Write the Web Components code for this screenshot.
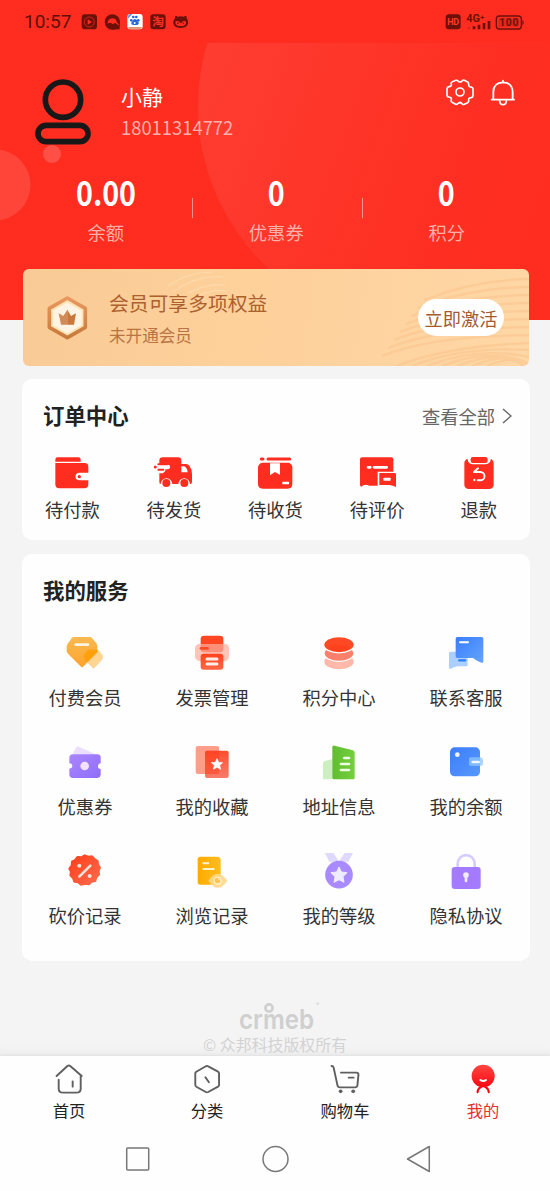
<!DOCTYPE html>
<html lang="zh-CN">
<head>
<meta charset="utf-8">
<title>我的</title>
<style>
html,body{margin:0;padding:0;background:#fefefe}
body{width:550px;height:1191px;overflow:hidden;font-family:"Noto Sans CJK SC",sans-serif;color:#303030}
</style>
</head>
<body>
<mine-page></mine-page>
<script>
const ICONS = {
  wallet: ['98 189 120 120', `<g fill="#ff2d20"><path d="M108 215v-6q0-7 7-7h62q7 0 7 7v6z"/><path d="M108 219h88q11 0 11 11v18h-27a11.500 11.500 0 0 0 0 23h27v12q0 12-12 12h-75q-12 0-12-12z"/><circle cx="180" cy="260" r="5"/></g>`],
  truck: ['402 189 120 120', `<g fill="#ff2d20"><path d="M418 212q0-10 10-10h46q10 0 10 10v10h14q7 0 11 7 7 10 7 23v24q0 6-5 6h-1a17.500 17.500 0 0 0-35 0h-18a17.500 17.500 0 0 0-35 0q-4 0-4-5z"/><circle cx="439" cy="279" r="12"/><circle cx="493" cy="279" r="12"/></g><path d="M484 229h8q10 4 11 18h-19z" fill="#fff"/><path d="M412 231h32M412 240h18" stroke="#fff" stroke-width="13" stroke-linecap="round"/><path d="M415 223h28M415 239h15" stroke="#ff2d20" stroke-width="6" stroke-linecap="round"/><path d="M415 231h30M415 247h14" stroke="#fff" stroke-width="5" stroke-linecap="round"/><circle cx="406" cy="231" r="4.500" fill="#ff2d20"/>`],
  box: ['706 189 120 120', `<path d="M725 207h5M745 207h65" stroke="#ff2d20" stroke-width="9" stroke-linecap="round"/><path d="M727 218h81q10 5 10 14v50q0 14-14 14h-75q-14 0-14-14v-49q0-11 12-15z" fill="#ff2d20"/><path d="M751 220h30v35l-15-9-15 10z" fill="#fff"/><rect x="788" y="275" width="20" height="8" rx="2" fill="#fff"/>`],
  comment: ['231 189 120 120', `<path d="M240 208q0-6 6-6h88q6 0 6 6v37h-47v42h-25q-14-7-24 3-4-2-4-6z" fill="#ff2d20"/><path d="M298 249h46q4 0 4 4v38q-13-6-21-6h-29z" fill="#ff2d20"/><path d="M264 232h7M282 232h38" stroke="#fff" stroke-width="8" stroke-linecap="round"/><rect x="310" y="263" width="22" height="9" rx="2" fill="#fff"/>`],
  refund: ['537 189 120 120', `<rect x="553" y="206" width="88" height="91" rx="13" fill="#ff2d20"/><path d="M563 196h69v14q-3 13-18 13h-35q-14-1-16-14z" fill="#fff"/><rect x="572" y="201" width="51" height="18" rx="7" fill="#ff2d20"/><path d="M594 235l-12 11h19a11 11 0 0 1 0 25h-8" fill="none" stroke="#fff" stroke-width="6" stroke-linecap="round" stroke-linejoin="round"/><circle cx="583" cy="270" r="3.500" fill="#fff"/>`],
  gem: ['136 219 120 120', `<defs><linearGradient id="g" x2="0" y2="1"><stop stop-color="#f8b951"/><stop offset="1" stop-color="#ffa42d"/></linearGradient></defs><path d="M163 231h46q5 0 8 3l13 16q3 4 3 9v14q0 4-4 8l-39 39q-3 3-6 0l-39-39q-4-4-4-9v-13q0-4 3-8l12-16q3-4 7-4z" fill="url(#g)"/><path d="M209 269h22q4 0 7 3l9 11q3 4 3 8 0 5-3 8l-22 24q-3 3-7 0l-22-23q-4-4-4-9t3-9l8-9q3-4 6-4z" fill="#ff9d00" fill-opacity=".42"/><path d="M168 254h37" stroke="#fff4df" stroke-width="8" stroke-linecap="round"/><path d="M194 283q4-12 16-14h21l3 3v4l-32 29-9-11q-2-5 1-11z" fill="#ff9d00" fill-opacity=".65"/>`],
  invoice: ['517 219 120 120', `<defs><linearGradient id="g" x2="0" y2="1"><stop stop-color="#ff421d"/><stop offset="1" stop-color="#ff6745"/></linearGradient></defs><rect x="543" y="227" width="68" height="50" rx="10" fill="#ff4723"/><path d="M537 252h81q8 0 10 11v28q-1 12-16 13h-68q-14 0-18-12v-28q2-10 11-12z" fill="#ffac9b" fill-opacity=".72"/><rect x="543" y="281" width="68" height="48" rx="9" fill="url(#g)"/><path d="M544 265h20" stroke="#fc4b29" stroke-width="8" stroke-linecap="round"/><path d="M562 297h30M562 312h30" stroke="#ffede8" stroke-width="9" stroke-linecap="round"/>`],
  points: ['118 219 120 120', `<ellipse cx="178" cy="305" rx="44" ry="23" fill="#ffb9ab"/><ellipse cx="178" cy="280" rx="45" ry="24" fill="#fb806b" stroke="#fff" stroke-width="4"/><ellipse cx="178" cy="254" rx="46" ry="24.500" fill="#ff4925" stroke="#fff" stroke-width="4"/><ellipse cx="178" cy="264" rx="31" ry="10" fill="#ff3511" opacity=".35"/>`],
  service: ['499 219 120 120', `<defs><linearGradient id="g" x2="1" y2="1"><stop stop-color="#397dff"/><stop offset="1" stop-color="#65a5f8"/></linearGradient></defs><path d="M513 275h47q4 0 4 5v35q0 4-5 4h-26q-10 2-21 8-4 1-4-5v-42q0-5 5-5z" fill="#abcfff"/><path d="M533 231h73q5 0 5 5v69q-1 5-6 3-18-7-24-14h-48q-5 0-5-5v-53q0-5 5-5z" fill="url(#g)"/><path d="M541 247h24" stroke="#fff" stroke-width="6" stroke-linecap="round"/><path d="M539 301h17" stroke="#287dff" stroke-width="7" stroke-linecap="round"/>`],
  coupon: ['136 546 120 120', `<defs><linearGradient id="g" x2="1" y2="1"><stop stop-color="#a987ff"/><stop offset="1" stop-color="#906dfa"/></linearGradient></defs><path d="M159 583l10-20q3-4 8-3l48 21v3z" fill="#ecdefe"/><path d="M159 583h75q9 1 9 9v18q-8 1-8 9t8 8v18q-1 8-9 9h-75q-9-1-10-9v-19q9-1 9-8t-9-8v-18q1-8 10-9z" fill="url(#g)"/><circle cx="195" cy="618" r="13" fill="#f2e2ff"/>`],
  favorite: ['517 546 120 120', `<defs><linearGradient id="g" x2="0" y2="1"><stop stop-color="#ff4e2c"/><stop offset="1" stop-color="#f87c6a"/></linearGradient></defs><rect x="528" y="558" width="70" height="84" rx="6" fill="#ff9d8b"/><rect x="556" y="572" width="71" height="82" rx="6" fill="url(#g)"/><path d="M556 578q0-6 6-6h36v70h-42z" fill="#ff3a1a" opacity=".45"/><path d="M592 596l5 11 12 1-9 8 3 12-11-6-11 6 3-12-9-8 12-1z" fill="#fff" stroke="#fff" stroke-width="2"/>`],
  address: ['118 546 120 120', `<defs><linearGradient id="g" x2="1"><stop stop-color="#60bd31"/><stop offset="1" stop-color="#75cf3e"/></linearGradient></defs><path d="M136 603l22-6v61h-24q-4 0-4-4v-43q0-6 6-8z" fill="#ccefc0"/><path d="M158 562q0-7 7-5l55 14q5 2 5 7v75q0 5-5 5h-57q-5 0-5-5z" fill="url(#g)"/><path d="M194 594h14M184 612h24M184 630h24" stroke="#edffdf" stroke-width="8" stroke-linecap="round"/>`],
  balance: ['499 546 120 120', `<defs><linearGradient id="g" x2="1" y2="1"><stop stop-color="#3c7dfd"/><stop offset="1" stop-color="#5798fa"/></linearGradient></defs><rect x="511" y="562" width="90" height="87" rx="14" fill="url(#g)"/><circle cx="533" cy="584" r="7" fill="#f0f7ff"/><path d="M573 592h29q7 0 8 8v12q-1 6-8 6h-29q-5 0-5-5v-16q0-5 5-5z" fill="#8dc5ff" fill-opacity=".75"/><path d="M579 606h18" stroke="#f1f8ff" stroke-width="8" stroke-linecap="round"/>`],
  bargain: ['136 33 120 120', `<defs><linearGradient id="g" x2="1" y2="1"><stop stop-color="#ff3d19"/><stop offset="1" stop-color="#fc6d50"/></linearGradient></defs><path fill="url(#g)" stroke="url(#g)" stroke-width="6" stroke-linejoin="round" d="M195 46l11 4 11-1 8 8 9 6 1 11 6 9-4 10 1 11-8 8-3 11-11 2-8 8-12-2-12 3-9-7-11-2-4-11-8-8 2-11-5-9 7-9 1-12 9-5 7-9 12 1z"/><path d="M179 110l33-33" stroke="#ffe1d8" stroke-width="8" stroke-linecap="round"/><circle cx="179" cy="77" r="6" fill="#ffe1d8"/><circle cx="210" cy="108" r="6" fill="#ffe1d8"/>`],
  history: ['517 33 120 120', `<defs><linearGradient id="g" x2="1"><stop stop-color="#ffab00"/><stop offset="1" stop-color="#ffbc1f"/></linearGradient></defs><path d="M542 50h50q11 0 11 11v56q0 17-18 17h-43q-8 0-8-8V58q0-8 8-8z" fill="url(#g)"/><path d="M551 70h15M551 87h31" stroke="#fff3d0" stroke-width="6" stroke-linecap="round"/><path d="M566 122q27-42 57 0-29 43-57 0z" fill="#ffd789" fill-opacity=".9"/><circle cx="594" cy="122" r="10" fill="none" stroke="#fff0cd" stroke-width="4"/><path d="M594 122l7-3a8 8 0 1 1-7-6z" fill="#ffc24f"/>`],
  level: ['898 33 120 120', `<path d="M916 39h25l16 24-8 2h-20zM975 39h25l-14 26h-20l-7-3z" fill="#dfd8ff"/><circle cx="958" cy="104" r="41.500" fill="#a98bff"/><path d="M958 81l7 15 17 2-12 12 3 17-15-8-15 8 3-17-12-12 17-2z" fill="#f0ecff" stroke="#f0ecff" stroke-width="3" stroke-linejoin="round"/>`],
  privacy: ['1279 33 120 120', `<path d="M1314 84V71a25.500 25.500 0 0 1 51 0v13" fill="none" stroke="#d7ccff" stroke-width="8"/><rect x="1296" y="81" width="87" height="66" rx="9" fill="#a47bff"/><circle cx="1339" cy="105" r="8.500" fill="#f2eaff"/><path d="M1339 105v18" stroke="#f2eaff" stroke-width="8" stroke-linecap="round"/>`],
  home: ['145 34 103 108', `<g fill="none" stroke="#606060" stroke-width="5.500" stroke-linecap="round" stroke-linejoin="round"><path d="M161 79l31-30q4-3 8 0l33 30M167 90v27q0 12 13 12h37q13 0 13-12V78M207 95v16"/></g>`],
  category: ['539 34 103 108', `<g fill="none" stroke="#606060" stroke-width="5.500" stroke-linecap="round" stroke-linejoin="round"><path d="M587 50q4-2 7 0l28 16q3 2 3 5v35q0 3-3 5l-28 16q-4 2-7 0l-27-16q-3-2-3-5V71q0-3 3-5zM586 83l10 15"/></g>`],
  cart: ['932 34 103 108', `<g fill="none" stroke="#606060" stroke-width="5.500" stroke-linecap="round" stroke-linejoin="round"><path d="M945 49q5 0 6 5l11 53q1 6 7 6h43q6 0 7-6l3-32q0-6-6-6h-44M994 84h14"/></g><circle cx="971" cy="125" r="5.500" fill="#606060"/><circle cx="1007" cy="125" r="5.500" fill="#606060"/>`],
  mine: ['1325 34 103 108', `<defs><linearGradient id="g" x2="0" y2="1"><stop stop-color="#ff4640"/><stop offset="1" stop-color="#fa0713"/></linearGradient></defs><path d="M1361 128q0-10 8-15l8-5 8 5q8 5 8 15" fill="none" stroke="#f80813" stroke-width="6" stroke-linecap="round"/><ellipse cx="1377" cy="79" rx="33" ry="34" fill="url(#g)"/><path d="M1369 91q8 6 16 0" fill="none" stroke="#fff" stroke-width="6" stroke-linecap="round"/>`]
};
const svg = (name, size) => `<svg width="${size}" height="${size}" viewBox="${ICONS[name][0]}" preserveAspectRatio="none" style="display:block;overflow:visible">${ICONS[name][1]}</svg>`;
const define = (tag, render) => customElements.define(tag, class extends HTMLElement {
  connectedCallback() {
    if (this.shadowRoot) return;
    const t = document.createElement('template');
    t.innerHTML = render(this);
    this.attachShadow({mode: 'open'}).append(t.content.cloneNode(true));
  }
});

define('status-bar', () => `<style>
:host{display:flex;height:43px;align-items:center;justify-content:space-between;padding:0 24px 0 24px;box-sizing:border-box;color:#5e0f08;font:19px/43px Roboto,sans-serif}
.l{display:flex;align-items:center;gap:9px}.t{width:47px;white-space:nowrap}svg{display:block;overflow:visible}
</style><div class="l"><span class="t">10:57</span>
<svg width="111.670" height="20" viewBox="240 35 335 60"><g fill="#6d1009"><rect x="245" y="42" width="46" height="45" rx="10"/><circle cx="337" cy="65" r="23"/><path d="M337 65h22v22h-22z"/><rect x="451" y="42" width="46" height="45" rx="9"/><path d="M525 54q-1-12 8-5 9-3 19 0 9-7 8 5 8 10 2 21-6 8-20 8t-20-8q-6-11 3-21z"/></g>
<circle cx="268" cy="65" r="15" fill="none" stroke="#e5281c" stroke-width="2.500"/><path d="M263 57l13 8-13 8z" fill="#ff2d20"/>
<path d="M323 70q0-15 14-16 12 0 14 13 5 2 7 7-7 0-11-6-5 0-8 4-7-8-16-2z" fill="#ff2d20"/>
<rect x="382" y="41" width="46" height="46" rx="9" fill="#fff"/><path d="M384 80h42q-2 7-9 7h-25q-7 0-8-7z" fill="#dc9a78"/><g fill="#2465d8"><circle cx="394" cy="60" r="4"/><circle cx="400" cy="50" r="4"/><circle cx="409" cy="50" r="4"/><circle cx="415" cy="60" r="4"/><path d="M405 56q5 0 7 6 6 4 4 9-2 4-11 3-9 1-11-3-1-5 4-9 2-6 7-6z"/><path d="M383 50q1-8 8-9h6l-13 14z" opacity=".7"/></g><circle cx="404" cy="68" r="3" fill="#fff"/>
<text x="474" y="77" text-anchor="middle" font-size="35" font-weight="700" fill="#ff3025" font-family="Noto Sans CJK SC">淘</text>
<path d="M527 63q9-3 14 5h3q4-8 13-5 4 11-8 14h-13q-12-3-9-14z" fill="#ff2d20"/><circle cx="534" cy="69" r="2.500" fill="#6d1009"/><circle cx="550" cy="69" r="2.500" fill="#6d1009"/></svg></div>
<svg width="81" height="20" viewBox="517 35 243 60"><rect x="519" y="42" width="45" height="45" rx="9" fill="#6d1009"/><text x="541.500" y="74.500" text-anchor="middle" font-size="27" font-weight="700" fill="#ff382a" textLength="36">HD</text><text x="581" y="64" font-size="31" font-weight="700" fill="#6d1009" textLength="54" lengthAdjust="spacingAndGlyphs">4G⁺</text><g fill="#6d1009"><path d="M600 78h8v9h-8zM615 73h8v14h-8zM630 68h8v19h-8zM645 62h8v25h-8z"/><path d="M585 80h7v7h-7z" opacity=".25"/><path d="M749 60q4 0 4 7t-4 7z"/></g><rect x="671" y="47" width="75" height="39" rx="9" fill="none" stroke="#6d1009" stroke-width="4"/><rect x="677" y="53" width="63" height="27" rx="4" fill="#6d1009" opacity=".22"/><text x="708.500" y="78" text-anchor="middle" font-size="31" font-weight="700" fill="#6d1009" textLength="58">100</text></svg>`);

define('user-info', () => `<style>
:host{display:flex;height:110px;padding:34px 34px 0 33px;box-sizing:border-box;align-items:flex-start}
svg{display:block;flex:none}.n{flex:1;padding:5px 0 0 28px;color:#fff}
.name{font-size:21px;line-height:28px}.phone{font-size:18.400px;line-height:26px;margin-top:4px;color:#ffb0a9}
.a{display:flex;gap:16px;padding-top:1px}
</style><svg width="60" height="70" viewBox="100 230 180 210"><g fill="none" stroke="#181818" stroke-width="17"><circle cx="190" cy="298" r="53"/><rect x="115" y="375" width="150" height="49" rx="24.500"/></g></svg>
<div class="n"><div class="name">小静</div><div class="phone">18011314772</div></div>
<div class="a"><svg width="28" height="28" viewBox="515 233 84 84"><path d="M545 240q5-1 7 3 5 4 10 0 3-5 8-3l10 5q4 3 3 9 1 7 8 6 5 1 5 6v20q0 5-6 6-8 1-7 7 1 5-3 8l-10 5q-5 2-8-3-5-5-10 0-3 4-8 3l-11-6q-4-3-2-8 1-7-7-8-6 0-6-6v-19q0-5 6-6 8-1 7-7-2-6 3-8z" fill="none" stroke="#fff" stroke-width="5" stroke-linejoin="round"/><circle cx="557" cy="275" r="12" fill="none" stroke="#fff" stroke-width="5"/></svg>
<svg width="26" height="28" viewBox="647 233 78 84"><g fill="none" stroke="#fff" stroke-width="5.500" stroke-linecap="round"><path d="M686 241v5M657 297v-22q0-28 29-29 28 1 29 29v22M652 298h67M676 302q1 11 10 11t10-11"/></g></svg></div>`);

define('stat-item', el => `<style>
:host{display:flex;flex:1;flex-direction:column;align-items:center;position:relative}
:host(:not(:last-child))::after{content:"";position:absolute;right:-1.500px;top:25px;width:1px;height:20px;background:#ff958d}
b{font-size:31.500px;line-height:36px;height:36px;font-weight:700;color:#fff;transform:scale(.91,1.05)}
span{font-size:18.300px;line-height:26px;margin-top:9.500px;color:#ffb0a9}
</style><b>${el.getAttribute('value')}</b><span><slot></slot></span>`);

define('user-header', () => `<style>
:host{display:block;height:320px;position:relative;background:#ff2d20;overflow:hidden}
.bg{position:absolute;left:0;top:0}.c{position:relative}.s{display:flex;margin:0 18px 0 20.500px;padding-top:20px}
</style><svg class="bg" width="550" height="320"><defs><linearGradient id="h" x2="1" y2=".35"><stop stop-color="#ff4034"/><stop offset=".4" stop-color="#fe362a"/><stop offset="1" stop-color="#fe2d20" stop-opacity="0"/></linearGradient><clipPath id="c"><path d="M0 43h550v277H0z"/></clipPath></defs><g clip-path="url(#c)"><ellipse cx="432" cy="107" rx="234" ry="226" fill="url(#h)"/></g><circle cx="-5" cy="185" r="35.500" fill="#ff453a"/><circle cx="52" cy="154" r="9" fill="#ff5047"/></svg>
<div class="c"><status-bar></status-bar><user-info></user-info><div class="s"><stat-item value="0.00">余额</stat-item><stat-item value="0">优惠券</stat-item><stat-item value="0">积分</stat-item></div></div>`);

const waves = Array.from({length: 15}, (_, i) => {
  const x = i < 8 ? 401 - 6 * i : 359 + 15 * (i - 7);
  const y = i < 8 ? 31 + 8 * i : 97;
  return `<path d="M${x} ${y}Q${x + 50} ${y - 20} 506 ${10 + 8 * i - (i > 8 ? i - 8 : 0)}"/>`;
}).join('');
define('vip-card', () => `<style>
:host{display:flex;position:relative;height:97px;margin:-51px 21px 0 23px;border-radius:6px;background:linear-gradient(100deg,#f8cb96,#fed09a 45%,#fed7a6);overflow:hidden;align-items:center;padding:0 25px 0 24px;box-sizing:border-box}
.w{position:absolute;left:0;top:0}.m{display:block;flex:none;position:relative}
.t{position:relative;flex:1;padding-left:21px}.a{font-size:19.800px;line-height:30px;color:#ad602f}.b{font-size:16.600px;line-height:24px;margin-top:5px;color:#b97446}
.btn{position:relative;width:86px;height:37px;border-radius:19px;background:#fff;font-size:18.200px;line-height:38px;text-align:center;color:#a35a31}
</style><svg class="w" width="506" height="97" fill="none" stroke="#f9c189" stroke-width="2.400"><g opacity=".5">${waves}</g><g stroke="#ffe1b8" stroke-width="1.500" opacity=".5"><path d="M145 17q20-14 45-14M150 23q25-18 50-15M165 24q20-10 37-8M177 26q12-6 26-4"/></g></svg>
<svg class="m" width="41" height="46" viewBox="82 89 123 138"><defs><linearGradient id="o" x2="0" y2="1"><stop stop-color="#e9985f"/><stop offset="1" stop-color="#c77a3b"/></linearGradient><linearGradient id="p"><stop offset=".52" stop-color="#d28a58"/><stop offset=".52" stop-color="#c97839"/></linearGradient></defs><path d="M143 98l54 31v57l-54 31-54-31v-57z" fill="#ffe2b4" stroke="url(#o)" stroke-width="11" stroke-linejoin="round"/><path d="M143 114l41 23v41l-41 24-41-24v-41z" fill="#fff3e4" stroke="#fff3e4" stroke-width="4" stroke-linejoin="round"/><path d="M117 144l14 8 12-19 11 19 15-8-6 34h-39z" fill="url(#p)"/></svg>
<div class="t"><div class="a">会员可享多项权益</div><div class="b">未开通会员</div></div><div class="btn">立即激活</div>`);

define('panel-card', el => `<style>
:host{display:block;margin:0 20px 0 22px;background:#fefefe;border-radius:10px;box-sizing:border-box}
header{display:flex;height:74px;align-items:center;justify-content:space-between;padding:0 18px 0 21px;box-sizing:border-box}
h2{margin:-2px 0 0;font-size:21.400px;line-height:30px;font-weight:700;color:#222}
.x{display:flex;align-items:center;gap:7px;font-size:18.300px;line-height:26px;color:#666}
.g{display:grid;grid-template-columns:repeat(${el.getAttribute('columns')},1fr)}
svg{display:block}
</style><header><h2>${el.getAttribute('heading')}</h2>${el.hasAttribute('more') ? `<div class="x">${el.getAttribute('more')}<svg width="10" height="18" fill="none" stroke="#666" stroke-width="1.500"><path d="M1 2l8 7-8 7"/></svg></div>` : ''}</header><div class="g"><slot></slot></div>`);

define('icon-cell', el => `<style>
:host{display:flex;flex-direction:column;align-items:center}
span{font-size:18.300px;line-height:24px;margin-top:var(--label-gap,4px);white-space:nowrap;color:#333}
svg,span{position:relative;left:-.5px}
</style>${svg(el.getAttribute('icon'), 40)}<span><slot></slot></span>`);

define('brand-foot', () => `<style>
:host{display:flex;flex-direction:column;align-items:center;padding-top:39px;height:95px;box-sizing:border-box;color:#d2d2d2;background:linear-gradient(transparent 85px,#ededed)}
svg{display:block;overflow:visible}span{font-size:15.900px;line-height:22px;margin-top:-1px}
</style><svg width="80" height="35" viewBox="0 0 80 35"><text x="4" y="29" font-family="Inter,sans-serif" font-size="27" font-weight="600" fill="#cfcfcf" textLength="75" lengthAdjust="spacingAndGlyphs">crmeb</text><circle cx="34" cy="8" r="3.600" fill="none" stroke="#cfcfcf" stroke-width="2.600"/><text x="81" y="6" font-size="5" fill="#cfcfcf" font-family="Inter,sans-serif">®</text></svg><span>© 众邦科技版权所有</span>`);

define('tab-item', el => `<style>
:host{display:flex;flex:0 0 138px;flex-direction:column;align-items:center;padding-top:5px;font-size:16.300px;line-height:22px;color:#222}
:host([active]){color:#e5302c}span{margin-top:2px}
</style>${svg(el.getAttribute('icon'), 36)}<span><slot></slot></span>`);

define('tab-bar', () => `<style>:host{display:flex;height:74px;background:#fefefe;box-shadow:0 -1px 3px rgba(0,0,0,.05)}</style><slot></slot>`);

define('system-nav', () => `<style>:host{display:flex;height:61px;background:#fefefe;justify-content:space-between;padding:15px 117px 0 122px;box-sizing:border-box}svg{display:block;overflow:visible}</style>
<svg width="30" height="30"><rect x="4.700" y="3" width="22" height="22" rx="1" fill="none" stroke="#777" stroke-width="1.500"/></svg>
<svg width="30" height="30"><circle cx="12.500" cy="14" r="12.500" fill="none" stroke="#777" stroke-width="1.500"/></svg>
<svg width="30" height="30"><path d="M4.500 14L26.300 1.500v25z" fill="none" stroke="#777" stroke-width="1.500" stroke-linejoin="round"/></svg>`);

define('mine-page', () => `<style>
:host{display:flex;flex-direction:column;height:1191px;background:#f4f4f4;overflow:hidden}
.o{margin-top:13px;height:161px}.s{margin-top:14px;height:407px;--label-gap:12px}
.s icon-cell{height:109px;padding-top:5px;box-sizing:border-box}
</style><user-header></user-header><vip-card></vip-card>
<panel-card class="o" heading="订单中心" more="查看全部" columns="5"><icon-cell icon="wallet">待付款</icon-cell><icon-cell icon="truck">待发货</icon-cell><icon-cell icon="box">待收货</icon-cell><icon-cell icon="comment">待评价</icon-cell><icon-cell icon="refund">退款</icon-cell></panel-card>
<panel-card class="s" heading="我的服务" columns="4"><icon-cell icon="gem">付费会员</icon-cell><icon-cell icon="invoice">发票管理</icon-cell><icon-cell icon="points">积分中心</icon-cell><icon-cell icon="service">联系客服</icon-cell><icon-cell icon="coupon">优惠券</icon-cell><icon-cell icon="favorite">我的收藏</icon-cell><icon-cell icon="address">地址信息</icon-cell><icon-cell icon="balance">我的余额</icon-cell><icon-cell icon="bargain">砍价记录</icon-cell><icon-cell icon="history">浏览记录</icon-cell><icon-cell icon="level">我的等级</icon-cell><icon-cell icon="privacy">隐私协议</icon-cell></panel-card>
<brand-foot></brand-foot>
<tab-bar><tab-item icon="home">首页</tab-item><tab-item icon="category">分类</tab-item><tab-item icon="cart">购物车</tab-item><tab-item icon="mine" active>我的</tab-item></tab-bar><system-nav></system-nav>`);
</script>
</body>
</html>
